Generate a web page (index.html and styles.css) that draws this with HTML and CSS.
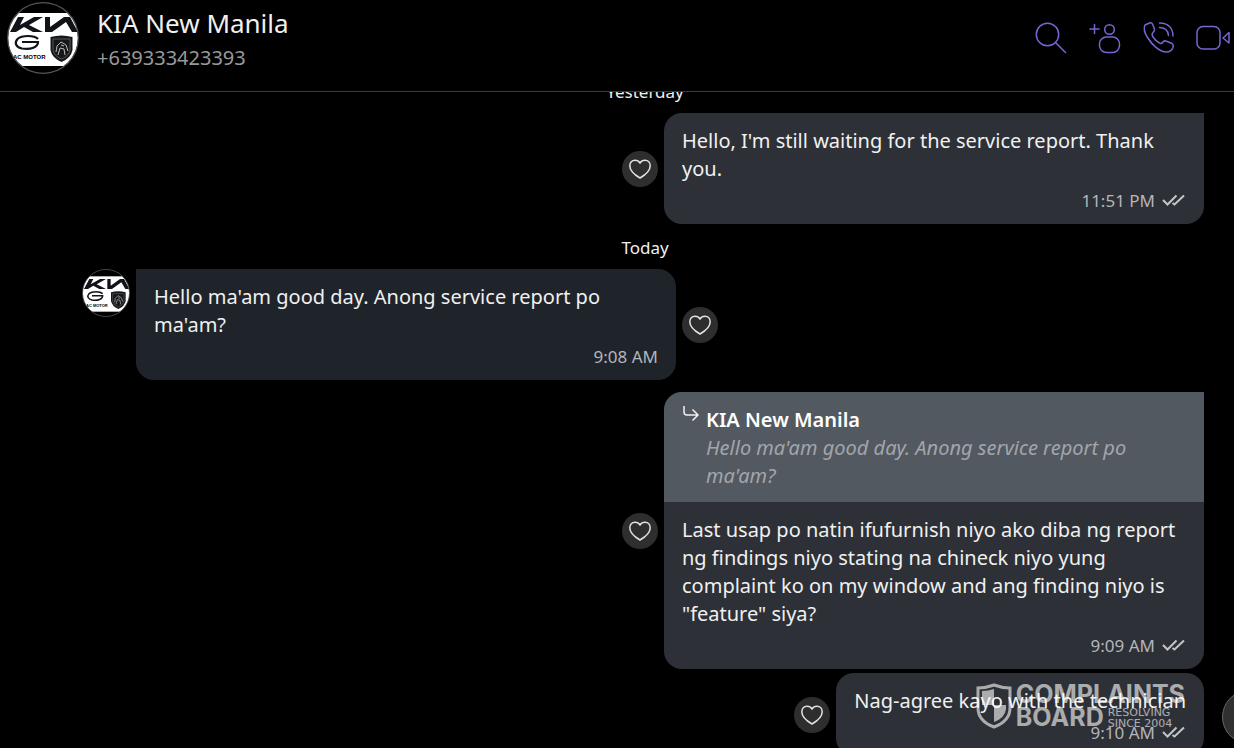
FILE: index.html
```html
<!DOCTYPE html>
<html lang="en">
<head>
  <meta charset="UTF-8">
  <meta name="viewport" content="width=device-width, initial-scale=1.0">
  <title>KIA New Manila</title>
  <link rel="stylesheet" href="styles.css">
</head>
<body>
  <!-- Shared icons -->
  <svg class="sprite" aria-hidden="true">
    <symbol id="avatar" viewBox="0 0 72 72">
      <clipPath id="round"><circle cx="36" cy="36" r="35"/></clipPath>
      <g clip-path="url(#round)">
        <rect width="72" height="72" fill="#000"/>
        <rect y="11" width="72" height="53" fill="#fff"/>
        <path d="M11 15H17L13 23L27 15H36L22 23L36 30H26L17 25L9 30H3ZM38 15H43V25L57 15H63L71 30H65L59 20L45 30H38Z" fill="#101418"/>
        <path d="M31 37C27 33 15 33 10.500 37C7 41 9 45 15 46.500C24 48 31 45 31 40H15" fill="none" stroke="#101418" stroke-width="2.200"/>
        <path d="M43.500 35Q54.500 32 65.500 35V48Q64 56 54.500 60Q45 56 43.500 48Z" fill="#15181b"/>
        <path d="M46 37H63V48Q62 54 54.500 57Q47 54 46 48Z" fill="none" stroke="#555" stroke-width="1"/>
        <path d="M49 50L50 44L54 40L59 43L61 49M51 53L53 46L57 47L58 53M54 43L57 44" fill="none" stroke="#bbb" stroke-width="1"/>
        <text x="6" y="56.500" class="avatar-text">AC MOTOR</text>
      </g>
      <circle cx="36" cy="36" r="35.300" fill="none" stroke="#555" stroke-width="1.200"/>
    </symbol>
    <symbol id="heart" viewBox="0 0 24 24">
      <path d="M12 21C8.500 19 1.800 14.500 1.800 8.800C1.800 5.500 4 3.300 7 3.300C9.200 3.300 11 4.300 12 6C13 4.300 14.800 3.300 17 3.300C20 3.300 22.200 5.500 22.200 8.800C22.200 14.500 15.500 19 12 21Z" fill="none" stroke="#e4e4e4" stroke-width="1.500" stroke-linejoin="round"/>
    </symbol>
    <symbol id="ticks" viewBox="0 0 24 14">
      <path d="M1 6L5.500 10.500L14.500 1.500M10.500 9L12.500 10.500L22 1.500" fill="none" stroke="#c3c5c9" stroke-width="2"/>
    </symbol>
  </svg>

  <header class="header">
    <svg class="header-avatar" role="img" aria-label="KIA New Manila"><use href="#avatar"/></svg>
    <div class="contact">
      <h1 class="contact-name">KIA New Manila</h1>
      <p class="contact-number">+639333423393</p>
    </div>
    <nav class="actions">
      <button class="action" type="button" aria-label="Search">
        <svg viewBox="0 0 36 36"><circle cx="14.500" cy="16.500" r="11.200"/><path d="M22.500 24.500L32.500 34.500"/></svg>
      </button>
      <button class="action" type="button" aria-label="Add participant">
        <svg viewBox="0 0 36 36"><path d="M3 11H12M7.500 6.500V15.500"/><circle cx="22.500" cy="11.500" r="4.800"/><rect x="12.500" y="19" width="20" height="15.500" rx="7"/></svg>
      </button>
      <button class="action" type="button" aria-label="Voice call">
        <svg viewBox="0 0 36 36"><path d="M4 7L8.500 5C10 4.500 11 5 11.500 6L13.500 11C14 12.500 13 13.500 12 14.500C10.500 15.800 10.800 17 12 19C14 22 16.500 24 18.500 25C20 26 21 25.500 22 24C23 22.800 24 22.500 25.500 23.200L31 25.500C32.500 26.500 32.500 28 32 29.500C31 32 28.500 34 25.500 34C19 34 11 27 6.500 19.500C4 15.500 2.500 10 4 7ZM18.500 9.500C23.500 9.500 27 12.500 27.500 17.500M18.500 5C27 5 32 10 32 18"/></svg>
      </button>
      <button class="action" type="button" aria-label="Video call">
        <svg viewBox="0 0 36 36"><rect x="2" y="8.500" width="23" height="22.500" rx="6"/><path d="M34 14.500V25L28 20Z"/></svg>
      </button>
    </nav>
  </header>

  <main class="chat">
    <div class="messages">
      <p class="date">Yesterday</p>

      <div class="row sent">
        <button class="like" type="button" aria-label="Like"><svg><use href="#heart"/></svg></button>
        <article class="bubble">
          <div class="body">
            <p>Hello, I'm still waiting for the service report. Thank you.</p>
            <div class="meta"><time>11:51 PM</time><svg class="ticks"><use href="#ticks"/></svg></div>
          </div>
        </article>
      </div>

      <p class="date">Today</p>

      <div class="row received">
        <svg class="row-avatar" role="img" aria-label="KIA New Manila"><use href="#avatar"/></svg>
        <article class="bubble">
          <div class="body">
            <p>Hello ma'am good day. Anong service report po ma'am?</p>
            <div class="meta"><time>9:08 AM</time></div>
          </div>
        </article>
        <button class="like" type="button" aria-label="Like"><svg><use href="#heart"/></svg></button>
      </div>

      <div class="row sent reply">
        <button class="like" type="button" aria-label="Like"><svg><use href="#heart"/></svg></button>
        <article class="bubble">
          <blockquote class="quote">
            <svg class="reply-arrow" viewBox="0 0 18 18"><path d="M2 0V6Q2 9 5 9H16M10.500 3.500L16 9L10.500 14.500"/></svg>
            <div>
              <strong>KIA New Manila</strong>
              <p>Hello ma'am good day. Anong service report po ma'am?</p>
            </div>
          </blockquote>
          <div class="body">
            <p>Last usap po natin ifufurnish niyo ako diba ng report ng findings niyo stating na chineck niyo yung complaint ko on my window and ang finding niyo is "feature" siya?</p>
            <div class="meta"><time>9:09 AM</time><svg class="ticks"><use href="#ticks"/></svg></div>
          </div>
        </article>
      </div>

      <div class="row sent">
        <button class="like" type="button" aria-label="Like"><svg><use href="#heart"/></svg></button>
        <article class="bubble round">
          <div class="body">
            <p>Nag-agree kayo with the technician</p>
            <div class="meta"><time>9:10 AM</time><svg class="ticks"><use href="#ticks"/></svg></div>
          </div>
        </article>
      </div>
    </div>
    <button class="scroll-down" type="button" aria-label="Scroll to bottom"></button>
  </main>

  <div class="watermark">
    <svg class="shield" viewBox="0 0 36 46">
      <path d="M18 2Q26 5 34 5V25Q34 38 18 44Q2 38 2 25V5Q10 5 18 2Z" fill="none" stroke="#fff" stroke-width="3"/>
      <path d="M18 6V22H6V8Q12 8 18 6ZM18 22H30V26Q29 35 18 39Z" fill="#fff"/>
    </svg>
    <div class="watermark-text">
      <span>COMPLAINTS</span>
      <div class="watermark-line">
        <span>BOARD</span>
        <small>RESOLVING<br>SINCE 2004</small>
      </div>
    </div>
  </div>
</body>
</html>
```
FILE: styles.css
```css
* {
  box-sizing: border-box;
}

body {
  display: flex;
  flex-direction: column;
  height: 100vh;
  margin: 0;
  overflow: hidden;
  background-color: #000;
  color: #f0f0f0;
  font-family: "Noto Sans", "Open Sans", sans-serif;
  font-size: 20px;
  line-height: 28px;
}

h1, p, blockquote {
  margin: 0;
}

button {
  padding: 0;
  border: none;
  background: none;
  cursor: pointer;
}

.sprite {
  position: absolute;
  width: 0;
  height: 0;
}

.avatar-text {
  font: bold 6px "Liberation Sans", sans-serif;
}

/* Header */
.header {
  display: flex;
  flex: none;
  align-items: flex-start;
  padding: 2px 3px 15px 7px;
  border-bottom: 1px solid #3a3a3a;
}

.header-avatar {
  width: 72px;
  height: 72px;
}

.contact {
  flex: 1;
  padding: 5px 0 0 18px;
}

.contact-name {
  font-size: 26px;
  font-weight: normal;
  line-height: 33px;
}

.contact-number {
  color: #999;
  line-height: 36px;
}

.actions {
  display: flex;
  gap: 18px;
  padding-top: 16px;
}

.action svg {
  display: block;
  width: 36px;
  height: 36px;
  fill: none;
  stroke: #7566d4;
  stroke-width: 1.5;
  stroke-linecap: round;
  stroke-linejoin: round;
}

/* Chat */
.chat {
  position: relative;
  flex: 1;
  min-height: 0;
  overflow: hidden;
}

.messages {
  margin-top: -24px;
  padding: 0 30px 0 82px;
  display: flex;
  flex-direction: column;
}

.date {
  margin: 11px 0 9px 4px;
  font-size: 17px;
  line-height: 25px;
  text-align: center;
}

.row {
  display: flex;
  align-items: center;
  gap: 6px;
}

.sent {
  justify-content: flex-end;
}

.reply {
  margin: 12px 0 4px;
}

.row-avatar {
  flex: none;
  align-self: flex-start;
  width: 48px;
  height: 48px;
}

.bubble {
  max-width: 540px;
  overflow: hidden;
  border-radius: 18px 0 18px 18px;
  background-color: #2d3036;
}

.bubble.round {
  border-radius: 18px;
}

.received .bubble {
  border-radius: 0 18px 18px 18px;
  background-color: #1f242a;
}

.body {
  padding: 14px 18px 9px;
}

.meta {
  display: flex;
  align-items: center;
  justify-content: flex-end;
  gap: 7px;
  padding-top: 4px;
  color: #b4b6ba;
  font-size: 17px;
}

.ticks {
  width: 24px;
  height: 14px;
}

.quote {
  display: flex;
  gap: 6px;
  padding: 14px 18px 12px;
  background-color: #535960;
}

.quote strong {
  font-weight: 600;
  color: #fff;
}

.quote p {
  color: #a2a6ab;
  font-style: italic;
}

.reply-arrow {
  flex: none;
  width: 18px;
  height: 18px;
  fill: none;
  stroke: #f0f0f0;
  stroke-width: 1.5;
}

.like {
  display: flex;
  flex: none;
  align-items: center;
  justify-content: center;
  width: 36px;
  height: 36px;
  border-radius: 50%;
  background-color: #2e2e2e;
}

.like svg {
  width: 24px;
  height: 24px;
}

.scroll-down {
  position: absolute;
  right: -42px;
  bottom: 4px;
  width: 54px;
  height: 54px;
  border: 1px solid #666;
  border-radius: 50%;
  background-color: #303030;
}

/* Watermark */
.watermark {
  position: absolute;
  right: 49px;
  bottom: 19px;
  display: flex;
  align-items: center;
  gap: 4px;
  opacity: 0.6;
  color: #fff;
  font-family: Inter, sans-serif;
  font-size: 25px;
  font-weight: 700;
  line-height: 23px;
}

.shield {
  width: 36px;
  height: 46px;
}

.watermark-line {
  display: flex;
  align-items: center;
  gap: 4px;
}

.watermark small {
  font-family: "DejaVu Sans", sans-serif;
  font-size: 11px;
  font-weight: normal;
  line-height: 11px;
}
```
